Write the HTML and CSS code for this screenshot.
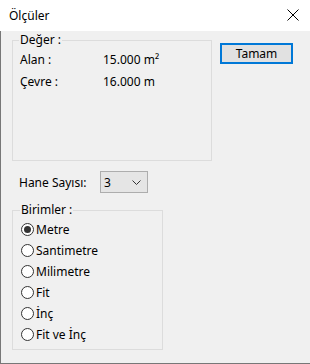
FILE: index.html
```html
<!DOCTYPE html>
<html lang="tr">
<head>
  <meta charset="UTF-8">
  <title>Ölçüler</title>
  <link rel="stylesheet" href="styles.css">
</head>
<body>

  <div class="window">
    <div class="titlebar">
      <span class="title">Ölçüler</span>
      <svg class="close-icon" width="12" height="12" viewBox="0 0 12 12">
        <path d="M0.5 0.5 L11.5 11.5 M11.5 0.5 L0.5 11.5" stroke="#000" stroke-width="1"/>
      </svg>
    </div>

    <div class="content">
      <div class="top-row">
        <fieldset class="group values">
          <legend>Değer :</legend>
          <div class="value-row"><span class="key">Alan :</span><span>15.000 m²</span></div>
          <div class="value-row"><span class="key">Çevre :</span><span>16.000 m</span></div>
        </fieldset>
        <button class="ok-button">Tamam</button>
      </div>

      <div class="digits-row">
        <label>Hane Sayısı:</label>
        <div class="combo">
          <span>3</span>
          <svg width="9" height="5" viewBox="0 0 9 5">
            <path d="M0.5 0.5 L4.5 4.5 L8.5 0.5" stroke="#333" fill="none" stroke-width="1"/>
          </svg>
        </div>
      </div>

      <fieldset class="group units">
        <legend>Birimler :</legend>
        <div class="radio checked"><span class="dot"></span>Metre</div>
        <div class="radio"><span class="dot"></span>Santimetre</div>
        <div class="radio"><span class="dot"></span>Milimetre</div>
        <div class="radio"><span class="dot"></span>Fit</div>
        <div class="radio"><span class="dot"></span>İnç</div>
        <div class="radio"><span class="dot"></span>Fit ve İnç</div>
      </fieldset>
    </div>
  </div>

</body>
</html>
```

FILE: styles.css
```css
body {
  margin: 0;
  font-family: "Noto Sans", "Open Sans", sans-serif;
  font-size: 12px;
  color: #000;
  background-color: #f0f0f0;
}

.window {
  width: 310px;
  height: 364px;
  box-sizing: border-box;
  display: flex;
  flex-direction: column;
  border-bottom: 1px solid #777;
}

.titlebar {
  height: 31px;
  flex-shrink: 0;
  background-color: #ffffff;
  display: flex;
  align-items: center;
  justify-content: space-between;
  padding: 0 11px 0 9px;
}

.title {
  font-size: 12px;
  margin-top: -1px;
}

.close-icon {
  margin-top: -1px;
}

.content {
  flex: 1;
  background-color: #f0f0f0;
  border-left: 1px solid #777;
  padding: 2px 0 0 11px;
}

.top-row {
  display: flex;
  align-items: flex-start;
}

.group {
  margin: 0;
  border: 1px solid #dcdcdc;
  box-sizing: border-box;
  padding: 1px 0 0 7px;
}

.group legend {
  padding: 0 1px;
  margin-left: -1px;
  line-height: 14px;
}

.values {
  width: 200px;
  height: 128px;
}

.value-row {
  display: flex;
  height: 22px;
  align-items: center;
}

.value-row .key {
  width: 83px;
}

.ok-button {
  margin: 10px 0 0 8px;
  width: 73px;
  height: 21px;
  padding: 0;
  font-family: inherit;
  font-size: 12px;
  background-color: #e1e1e1;
  border: 2px solid #0078d7;
  color: #000;
}

.digits-row {
  display: flex;
  align-items: center;
  margin-top: 10px;
  height: 22px;
}

.digits-row label {
  width: 81px;
  padding-left: 7px;
}

.combo {
  width: 48px;
  height: 22px;
  box-sizing: border-box;
  border: 1px solid #adadad;
  background-color: #e5e5e5;
  display: flex;
  align-items: center;
  justify-content: space-between;
  padding: 0 6px 0 3px;
}

.units {
  width: 151px;
  height: 147px;
  margin-top: 10px;
  padding: 2px 0 0 8px;
}

.radio {
  display: flex;
  align-items: center;
  height: 21px;
}

.radio .dot {
  width: 13px;
  height: 13px;
  box-sizing: border-box;
  border: 1px solid #333;
  border-radius: 50%;
  background-color: #fff;
  margin-right: 2px;
  display: flex;
  align-items: center;
  justify-content: center;
}

.radio.checked .dot::after {
  content: "";
  width: 7px;
  height: 7px;
  border-radius: 50%;
  background-color: #333;
}
```
